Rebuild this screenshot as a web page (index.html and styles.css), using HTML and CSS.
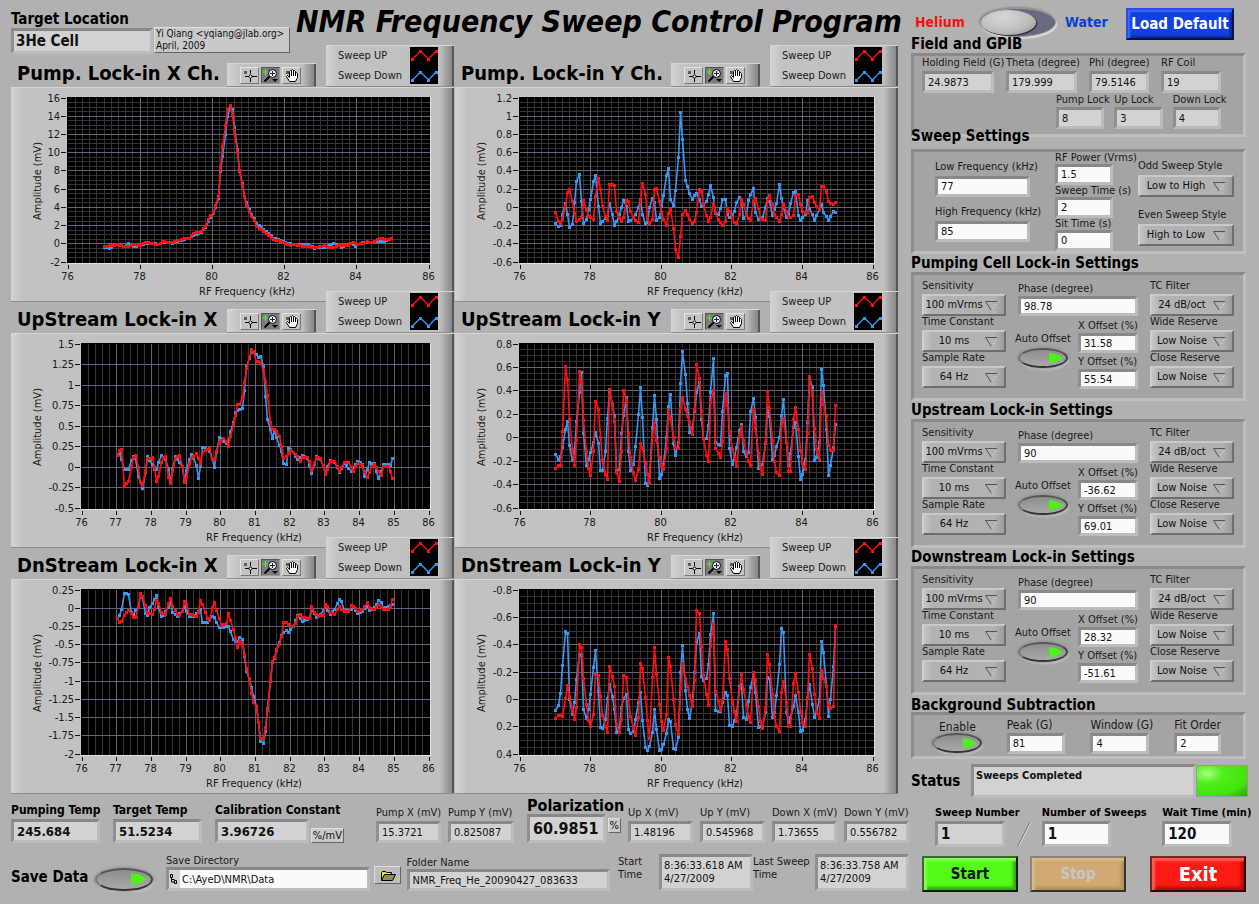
FILE: index.html
```html
<!DOCTYPE html>
<html lang="en">
<head>
<meta charset="utf-8">
<title>NMR Frequency Sweep Control Program</title>
<link rel="stylesheet" href="styles.css">
</head>
<body>
<main class="app">
  <section class="main-col">
    <header class="top">
      <div class="field target">
        <label class="h-label" for="target">Target Location</label>
        <input class="box big" id="target" value="3He Cell" readonly>
      </div>
      <p class="tag author">Yi Qiang &lt;yqiang@jlab.org&gt;<br>April, 2009</p>
      <h1>NMR Frequency Sweep Control Program</h1>
    </header>

    <div class="charts" id="charts"></div>

    <div class="readings">
      <div class="field pad-r"><label class="b-label" for="pt">Pumping Temp</label><input class="box value" id="pt" value="245.684" readonly></div>
      <div class="field pad-r"><label class="b-label" for="tt">Target Temp</label><input class="box value" id="tt" value="51.5234" readonly></div>
      <div class="field"><label class="b-label" for="cc">Calibration Constant</label><div class="with-unit calib"><input class="box value" id="cc" value="3.96726" readonly><span class="tag unit">%/mV</span></div></div>
      <div class="field"><label for="px">Pump X (mV)</label><input class="box" id="px" value="15.3721" readonly></div>
      <div class="field pad-r"><label for="py">Pump Y (mV)</label><input class="box" id="py" value="0.825087" readonly></div>
      <div class="field"><label class="p-label" for="pol">Polarization</label><div class="with-unit pol"><input class="box value pol-value" id="pol" value="60.9851" readonly><span class="tag unit">%</span></div></div>
      <div class="field"><label for="ux">Up X (mV)</label><input class="box" id="ux" value="1.48196" readonly></div>
      <div class="field"><label for="uy">Up Y (mV)</label><input class="box" id="uy" value="0.545968" readonly></div>
      <div class="field"><label for="dx">Down X (mV)</label><input class="box" id="dx" value="1.73655" readonly></div>
      <div class="field"><label for="dy">Down Y (mV)</label><input class="box" id="dy" value="0.556782" readonly></div>
    </div>

    <div class="saving">
      <label class="h-label save-label" for="save">Save Data</label>
      <input type="checkbox" class="toggle wide" id="save" checked>
      <div class="field grow">
        <label for="dir">Save Directory</label>
        <div class="box path">
          <svg width="9" height="12" viewBox="0 0 9 12" aria-hidden="true"><path d="M1.5 1.5h2v3h-2zM5.500 7.500h2v3h-2zM2.500 4.500v2h3M2.500 6.500v2.500h3" fill="none" stroke="#000"/></svg>
          <input id="dir" value="C:\AyeD\NMR\Data">
        </div>
      </div>
      <button class="browse" aria-label="Browse">
        <svg width="16" height="12" viewBox="0 0 16 12"><path d="M1.500 10.500v-8l1-1h3l1 1h5v2" fill="#e8e020" stroke="#000"/><path d="M1.500 10.500l3-6h11l-3 6z" fill="#8a8a70" stroke="#000"/></svg>
      </button>
      <div class="field grow">
        <label for="folder">Folder Name</label>
        <input class="box" id="folder" value="NMR_Freq_He_20090427_083633" readonly>
      </div>
      <div class="stamp start"><label for="st">Start Time</label><output class="box time" id="st">8:36:33.618 AM<br>4/27/2009</output></div>
      <div class="stamp last"><label for="ls">Last Sweep Time</label><output class="box time" id="ls">8:36:33.758 AM<br>4/27/2009</output></div>
    </div>
  </section>

  <aside class="side">
    <div class="target-switch">
      <label class="helium" for="gas">Helium</label>
      <input type="checkbox" class="slider" id="gas">
      <label class="water" for="gas">Water</label>
      <button class="action blue">Load Default</button>
    </div>

    <h2>Field and GPIB</h2>
    <div class="panel gpib">
      <div class="row row-a">
        <div class="field"><label for="hf">Holding Field (G)</label><input class="box" id="hf" value="24.9873" readonly></div>
        <div class="field"><label for="th">Theta (degree)</label><input class="box" id="th" value="179.999" readonly></div>
        <div class="field"><label for="ph">Phi (degree)</label><input class="box" id="ph" value="79.5146" readonly></div>
        <div class="field"><label for="rc">RF Coil</label><input class="box" id="rc" value="19" readonly></div>
      </div>
      <div class="row row-b">
        <div class="field"><label for="pl">Pump Lock</label><input class="box" id="pl" value="8" readonly></div>
        <div class="field"><label for="ul">Up Lock</label><input class="box" id="ul" value="3" readonly></div>
        <div class="field"><label for="dl">Down Lock</label><input class="box" id="dl" value="4" readonly></div>
      </div>
    </div>

    <h2 class="sweep-title">Sweep Settings</h2>
    <div class="panel sweep">
      <div class="stack freq">
        <div class="field"><label for="lf">Low Frequency (kHz)</label><input class="box edit" id="lf" value="77"></div>
        <div class="field"><label for="hfq">High Frequency (kHz)</label><input class="box edit" id="hfq" value="85"></div>
      </div>
      <div class="stack power">
        <div class="field"><label for="rp">RF Power (Vrms)</label><input class="box edit" id="rp" value="1.5"></div>
        <div class="field"><label for="swt">Sweep Time (s)</label><input class="box edit" id="swt" value="2"></div>
        <div class="field"><label for="sit">Sit Time (s)</label><input class="box edit" id="sit" value="0"></div>
      </div>
      <div class="stack style">
        <div class="field"><label for="os">Odd Sweep Style</label><div class="pick"><select id="os"><option>Low to High</option></select><svg viewBox="0 0 13 10"><path d="M0.500 0.500h12l-6 9z" fill="none" stroke="#555"/><path d="M12.500 0.500l-6 9" stroke="#ddd"/></svg></div></div>
        <div class="field"><label for="es">Even Sweep Style</label><div class="pick"><select id="es"><option>High to Low</option></select><svg viewBox="0 0 13 10"><path d="M0.500 0.500h12l-6 9z" fill="none" stroke="#555"/><path d="M12.500 0.500l-6 9" stroke="#ddd"/></svg></div></div>
      </div>
    </div>

    <div id="lockins"></div>

    <h2 class="bg-title">Background Subtraction</h2>
    <div class="panel background">
      <div class="field enable"><label for="en">Enable</label><input type="checkbox" class="toggle" id="en" checked></div>
      <div class="field"><label for="pk">Peak (G)</label><input class="box edit" id="pk" value="81"></div>
      <div class="field"><label for="wn">Window (G)</label><input class="box edit" id="wn" value="4"></div>
      <div class="field"><label for="fo">Fit Order</label><input class="box edit" id="fo" value="2"></div>
    </div>

    <div class="status">
      <label class="h-label" for="stat">Status</label>
      <output class="box" id="stat">Sweeps Completed</output>
      <span class="led"></span>
    </div>

    <div class="counts">
      <div class="field"><label for="sn">Sweep Number</label><input class="box" id="sn" value="1" readonly></div>
      <svg class="slash" viewBox="0 0 14 26" aria-hidden="true"><path d="M1 25L13 1" stroke="#666"/><path d="M2 25L14 1" stroke="#ddd"/></svg>
      <div class="field"><label for="ns">Number of Sweeps</label><input class="box edit" id="ns" value="1"></div>
      <div class="field wait"><label for="wt">Wait Time (min)</label><input class="box edit" id="wt" value="120"></div>
    </div>

    <div class="actions">
      <button class="action green">Start</button>
      <button class="action tan" disabled>Stop</button>
      <button class="action red">Exit</button>
    </div>
  </aside>
</main>
<script src="app.js"></script>
</body>
</html>
```
FILE: styles.css
```css
* { box-sizing: border-box; }

body {
  margin: 0;
  background: #b1b1b1;
  color: #111;
  font-family: "DejaVu Sans Condensed", "Noto Sans", sans-serif;
  font-size: 11px;
  line-height: 12px;
}

h1, h2, h3, p { margin: 0; }
label { white-space: nowrap; color: #1a1a1a; }
input, select, button, output { font: inherit; color: #111; }
svg { display: block; }

.app {
  display: grid;
  grid-template-columns: minmax(0, 900fr) minmax(0, 339fr);
  padding: 0 9px 0 11px;
}

.field { display: flex; flex-direction: column; min-width: 0; }

.box {
  width: 100%;
  min-width: 0;
  height: 22px;
  border: 3px solid;
  border-color: #888 #bcbcbc #bcbcbc #909090;
  background: #d2d2d2;
  padding: 0 3px;
}
.box.edit { background: #fafafa; }

.tag {
  background: #c9c9c9;
  border: 1px solid;
  border-color: #e0e0e0 #666 #666 #e0e0e0;
}

.h-label { font-size: 15px; line-height: 17px; font-weight: bold; color: #000; }
.b-label { font-size: 12px; line-height: 14px; font-weight: bold; color: #000; }

/* header */
.top { display: flex; height: 45px; padding-top: 11px; align-items: flex-start; }
.target { width: 142px; flex: none; }
.box.big { height: 26px; font-size: 15px; font-weight: bold; padding: 0 2px; }
.author { margin-top: 16px; margin-left: 1px; width: 136px; height: 26px; flex: none; padding: 0 1px; font-size: 10px; line-height: 12px; white-space: nowrap; }
h1 { margin-top: -6px; margin-left: 6px; font-size: 30px; line-height: 34px; font-style: italic; white-space: nowrap; color: #000; }

/* charts */
.charts { display: grid; grid-template-columns: minmax(0, 1fr) minmax(0, 1fr); column-gap: 1px; margin-right: 13px; }
.chart-head { display: flex; align-items: flex-end; height: 42px; position: relative; }
.chart:nth-child(n+3) .chart-head { margin-top: -11px; }
.chart-head h3 { flex: 1; padding-left: 6px; font-size: 20px; line-height: 28px; white-space: nowrap; color: #000; }
.raised {
  background: linear-gradient(90deg, #d4d4d4, #c2c2c2 12px, #c0c0c0 calc(100% - 14px), #a6a6a6 calc(100% - 9px), #888 calc(100% - 2px), #555 calc(100% - 2px));
  border-top: 1px solid #d6d6d6;
  border-bottom: 1px solid #8c8c8c;
}
.tools { display: flex; gap: 2px; width: 89px; height: 24px; padding: 3px 0 0 13px; margin-right: 10px; }
.tools button { width: 19px; height: 17px; padding: 0; border: 1px solid; border-color: #e4e4e4 #777 #777 #e4e4e4; background: #c4c4c4; }
.tools button.on { background: #7c7c7c; border-color: #555 #999 #999 #555; }
.legend { display: flex; justify-content: space-between; width: 128px; height: 42px; padding: 0 16px 0 12px; line-height: 20px; color: #1a1a1a; white-space: nowrap; }
.legend svg { margin-top: 1px; }
.plot { width: 100%; height: auto; font-size: 11px; fill: #1a1a1a; }

/* readings */
.readings {
  display: grid;
  grid-template-columns: 95fr 95fr 154fr 65fr 72fr 94fr 65fr 65fr 65fr 65fr;
  gap: 7px;
  align-items: end;
  width: calc(100% - 2px);
  margin-top: 4px;
}
.pad-r { padding-right: 6px; }
.readings label { margin-bottom: 2px; }
.readings .p-label { font-size: 16px; line-height: 16px; font-weight: bold; color: #000; margin-bottom: 0; }
.box.value { height: 24px; font-size: 13px; font-weight: bold; }
.box.pol-value { height: 29px; font-size: 16px; }
.with-unit { display: flex; gap: 2px; }
.calib { width: 129px; align-items: flex-end; }
.unit { flex: none; padding: 0 1px; line-height: 13px; }
.pol .unit { align-self: flex-start; margin-top: 4px; }

.saving { display: flex; align-items: flex-end; width: calc(100% - 2px); margin-top: 11px; }
.save-label { width: 84px; margin-bottom: 5px; }
.saving .grow { flex: 1; }
.path { display: flex; align-items: center; height: 24px; gap: 2px; padding: 0; }
.path input { flex: 1; min-width: 0; height: 18px; border: 0; padding: 0 2px; background: #fafafa; }
.browse { width: 27px; height: 18px; margin: 0 6px 7px 4px; padding: 1px 0 0 5px; border: 1px solid; border-color: #ddd #666 #666 #ddd; background: #bdbdbd; }
.stamp { display: flex; align-items: flex-start; }
.stamp label { white-space: normal; line-height: 13px; padding-top: 1px; }
.start { margin-left: 8px; }
.start label { width: 41px; }
.last label { width: 62px; }
.box.time { width: 94px; height: 37px; line-height: 13px; padding: 2px; white-space: nowrap; }

/* round toggles */
.toggle {
  appearance: none;
  position: relative;
  width: 50px;
  height: 20px;
  margin: 0;
  flex: none;
  border-radius: 50%;
  border: 2px solid;
  border-color: #555 #444 #333 #777;
  background: linear-gradient(#8e8e8e, #a8a8a8);
  box-shadow: 0 0 3px 1px #8f8f8f, 1px 2px 2px #d8d8d8;
}
.toggle:checked::before {
  content: "";
  position: absolute;
  right: 3px;
  top: 3px;
  width: 14px;
  height: 10px;
  background: #4cf01a;
  clip-path: polygon(0 0, 50% 10%, 100% 50%, 50% 90%, 0 100%);
}
.toggle.wide { width: 58px; height: 23px; margin: 0 13px 0 0; }
.toggle.wide:checked::before { width: 16px; height: 12px; right: 4px; }

.slider {
  appearance: none;
  position: relative;
  width: 76px;
  height: 29px;
  margin: 0 9px 0 0;
  border-radius: 50%;
  border: 1px solid #999;
  background: #69697f;
  box-shadow: 1px 2px 1px #ddd, -1px -1px 2px #888;
}
.slider::before {
  content: "";
  position: absolute;
  left: 0;
  top: 1px;
  width: 55px;
  height: 25px;
  border-radius: 50%;
  background: radial-gradient(ellipse at 40% 30%, #d8d8d8, #bbb 60%, #888);
  box-shadow: 1px 1px 1px #222;
}

/* side */
.target-switch { display: flex; height: 35px; padding: 8px 0 0 4px; align-items: flex-start; font-size: 14px; line-height: 28px; font-weight: bold; }
.target-switch .helium { color: #f21212; width: 65px; }
.target-switch .water { color: #0b3fd6; width: 61px; }

.action {
  height: 36px;
  border: 2px outset #444;
  font-weight: bold;
  font-size: 15px;
  padding: 0;
  white-space: nowrap;
}
.action.blue { flex: none; width: 108px; height: 32px; color: #fff; background: #1140e0; border-color: #1a2f90; box-shadow: inset 2px 2px 2px #3c6cff, inset -2px -2px 2px #0a2a9c; }
.action.green { background: #54fb18; border-color: #3a6a28; box-shadow: inset 3px 3px 2px #80ff50, inset -3px -3px 3px #2fae08; }
.action.tan { background: #d0a973; border-color: #8a8478; color: #c6c6c6; box-shadow: inset 3px 3px 2px #d9b987, inset -3px -3px 3px #b88f60; }
.action.red { background: #fc1a16; border-color: #7a2420; color: #fff; font-size: 20px; box-shadow: inset 3px 3px 2px #ff5a50, inset -3px -3px 3px #b00c08; }

h2 { font-size: 15px; line-height: 18px; white-space: nowrap; color: #000; position: relative; }

.panel {
  margin-right: 4px;
  border: 3px solid;
  border-color: #8a8a8a #bebebe #bebebe #8e8e8e;
  background: #a4a4a4;
}

.gpib { padding: 0 22px 5px 8px; }
.gpib label { line-height: 13px; margin-bottom: 2px; }
.row { display: grid; }
.row-a { grid-template-columns: 72fr 71fr 60fr 60fr; gap: 12px; }
.row-b { grid-template-columns: 49fr 49fr 49fr; gap: 10px; padding-left: 134px; }
.row-b label { margin-bottom: 1px; }

.sweep-title { margin-top: -10px; margin-bottom: 4px; }
.sweep { display: grid; grid-template-columns: 95fr 58fr 96fr; column-gap: 25px; padding: 0 9px 0 21px; }
.stack { display: flex; flex-direction: column; min-width: 0; }
.freq { padding-top: 9px; gap: 9px; }
.freq label { margin-bottom: 3px; }
.freq .box, .power .box { height: 21px; }
.style { padding-top: 8px; gap: 12px; }
.style label { margin-bottom: 3px; }

.pick { position: relative; }
.pick select {
  appearance: none;
  width: 100%;
  height: 22px;
  border: 2px solid;
  border-color: #c9c9c9 #6e6e6e #6e6e6e #d0d0d0;
  border-radius: 0;
  background: linear-gradient(90deg, #c6c6c6, #b2b2b2 8px, #b2b2b2 88%, #9c9c9c);
  padding: 0 20px 0 0;
  text-align: center;
  text-align-last: center;
}
.pick svg { position: absolute; right: 8px; top: 7px; width: 13px; height: 10px; pointer-events: none; }

.lockin { display: grid; grid-template-columns: 84fr 120fr 84fr; column-gap: 12px; padding: 5px 9px 9px 8px; }
.lockin .stack label { margin-bottom: 2px; }
.lockin .mid { display: grid; grid-template-columns: 60fr 60fr; row-gap: 4px; padding-top: 3px; align-content: start; }
.lockin .mid label { margin-bottom: 1px; }
.lockin .mid .box { height: 20px; }
.lockin .phase { grid-column: 1 / -1; }
.lockin .offsets { display: grid; gap: 3px; }
.auto { padding-top: 13px; }
.auto label { margin-left: -3px; }
.auto .toggle { margin-top: 2px; }

.bg-title { margin-top: 1px; margin-bottom: -2px; }
.background { display: grid; grid-template-columns: 50fr 59fr 59fr 47fr; column-gap: 25px; padding: 4px 22px 2px 18px; font-size: 12px; }
.background .box { font-size: 11px; height: 21px; margin-top: 1px; }
.background .field label { line-height: 13px; }
.enable label { padding-left: 7px; margin-top: 2px; }
.enable .toggle { margin-top: -1px; }

.status { display: flex; align-items: center; margin: 5px 2px 0 0; }
.status .h-label { width: 60px; flex: none; }
.status .box { flex: 1; height: 34px; padding: 3px 2px; font-weight: bold; }
.led { width: 52px; height: 32px; border: 1px solid #999; background: radial-gradient(ellipse at 20% 25%, #a8ff80, #4cf01a 30%, #44e40e 70%, #2aa800); }

.counts {
  display: grid;
  grid-template-columns: 70fr 37fr 70fr 51fr 70fr;
  align-items: end;
  padding: 8px 18px 0 24px;
  font-weight: bold;
}
.counts .wait { grid-column: 5; }
.counts label { line-height: 13px; margin-bottom: 2px; color: #000; }
.counts .box { height: 26px; font-size: 15px; font-weight: bold; }
.slash { width: 14px; height: 26px; margin-left: 12px; }

.actions { display: grid; grid-template-columns: 96fr 96fr 108fr; column-gap: 12px; margin: 9px 4px 0 11px; }
.actions .red { margin-left: 12px; }
```
FILE: app.js
```js
const RED = "#ff1010", BLUE = "#3c96f0";

const charts = [
  { title: "Pump. Lock-in X Ch.", left: 57, dx: 11, dy: 87, xstep: 2, xsub: 10, y: [16, -2, 2], ysub: 4,
    red: "314,737 350,731 380,737 400,731 420,733 440,724 470,731 488,722 520,724 545,715 565,711 580,698 600,691 615,675 625,656 638,633 646,613 652,586 658,550 664,500 672,436 679,373 685,326 691,313 700,344 706,395 712,455 718,508 726,553 733,587 739,613 748,631 755,645 762,658 770,676 790,692 820,715 850,724 870,733 885,730 910,736 950,739 970,734 995,740 1020,733 1045,733 1058,724 1075,731 1100,722 1120,724 1140,712 1160,716 1175,712",
    blue: "314,739 330,742 350,730 370,737 388,727 400,737 420,733 440,727 470,729 488,724 520,726 545,717 565,712 580,702 600,693 615,678 625,660 638,638 646,620 652,592 658,560 664,512 672,465 679,400 685,345 691,318 700,325 706,380 712,445 720,510 733,585 748,625 770,668 790,685 820,711 850,722 870,728 885,731 920,730 940,741 980,738 1003,727 1020,738 1050,728 1065,735 1085,724 1150,722 1175,712" },
  { title: "Pump. Lock-in Y Ch.", left: 65, dx: 5, dy: 87, xstep: 2, xsub: 10, y: [1.2, -0.6, 0.2], ysub: 4,
    blue: "317,667 325,677 332,672 343,607 350,640 358,680 365,670 372,640 376,604 383,542 391,520 398,600 404,667 411,655 418,625 424,596 431,541 436,523 443,615 449,668 458,660 470,645 477,607 483,640 490,674 497,673 503,660 515,620 523,599 530,615 536,661 545,658 555,640 562,620 568,595 575,640 583,668 590,664 600,620 608,592 615,605 622,658 630,648 640,583 650,523 656,502 662,596 667,614 674,568 682,470 688,380 694,334 700,415 707,538 716,577 724,596 733,582 742,577 752,616 760,612 768,600 775,580 781,553 788,590 795,638 803,640 813,622 820,596 826,595 833,640 842,650 852,630 860,605 866,590 873,600 881,652 890,640 898,598 908,562 914,562 919,634 926,655 935,650 945,620 953,592 960,600 967,644 978,608 985,575 991,550 998,592 1006,649 1015,640 1024,608 1033,575 1040,571 1046,643 1052,658 1062,640 1073,598 1080,625 1090,657 1100,643 1110,625 1118,611 1125,634 1133,658 1139,658 1150,632 1157,634",
    red: "317,634 325,660 335,674 341,655 349,574 358,565 365,602 372,638 377,655 383,661 392,650 401,598 409,626 418,645 425,650 430,655 436,586 442,532 449,565 458,617 465,647 470,658 477,640 482,550 490,553 497,600 503,632 510,652 516,661 523,649 530,598 536,600 545,632 553,650 562,664 568,598 575,547 582,580 590,625 595,652 602,667 608,655 616,565 622,562 629,602 636,632 643,655 650,673 655,638 661,625 667,682 674,745 682,769 688,750 694,706 700,640 707,628 715,640 722,655 728,668 735,661 742,634 748,566 755,571 762,610 768,644 775,661 782,650 789,608 797,634 805,655 815,673 823,661 830,622 838,632 845,650 852,664 860,667 866,640 874,595 881,610 888,640 895,652 905,658 913,602 919,592 926,622 934,652 942,661 948,658 952,598 958,583 966,610 974,640 985,661 992,640 1000,610 1010,632 1018,647 1025,650 1033,643 1040,583 1045,580 1052,610 1058,631 1070,637 1080,589 1085,587 1092,604 1100,617 1110,624 1118,556 1124,556 1133,587 1139,602 1150,611 1157,604" },
  { title: "UpStream Lock-in X", left: 71, dx: 11, dy: 38, xstep: 1, xsub: 5, y: [1.5, -0.5, 0.25], ysub: 1,
    red: "352,479 358,464 365,461 371,497 376,571 385,556 392,515 398,483 408,479 414,515 420,560 425,586 431,568 437,525 443,488 454,485 462,515 469,556 476,541 482,500 490,483 502,481 508,545 515,563 522,525 528,486 540,478 547,510 554,559 560,545 566,505 572,488 585,472 592,487 600,503 610,468 620,461 632,458 638,490 645,490 650,466 658,440 665,432 670,427 677,436 683,450 690,420 697,385 703,358 710,338 716,325 721,325 728,304 736,260 742,216 748,185 755,161 762,166 769,197 776,197 782,200 788,222 794,257 800,298 808,378 814,410 820,400 827,400 833,407 840,420 848,450 855,488 862,480 870,464 880,470 890,480 897,497 905,483 920,485 927,495 932,524 938,522 943,502 950,483 965,487 972,510 978,535 985,520 992,497 1005,495 1012,512 1018,525 1025,515 1033,500 1048,500 1058,527 1065,510 1075,503 1087,507 1094,525 1100,544 1107,530 1115,512 1122,505 1130,515 1140,538 1147,525 1153,512 1165,511 1172,525 1178,548",
    blue: "352,479 358,473 368,490 376,520 385,520 392,492 398,481 408,488 415,540 425,580 431,576 443,480 450,492 462,519 472,520 482,478 495,490 505,520 515,560 528,482 535,490 545,510 554,556 565,490 572,475 580,485 592,530 598,548 605,510 611,454 620,460 632,466 643,514 650,470 658,424 667,428 680,442 688,435 697,378 703,350 716,344 727,337 736,283 742,210 755,165 769,176 776,185 782,181 788,212 798,300 806,370 815,428 820,428 827,400 838,448 848,465 855,503 858,506 866,458 875,460 890,490 905,478 920,487 937,531 950,482 965,490 977,530 990,492 1005,498 1021,530 1035,502 1055,525 1073,496 1085,505 1098,540 1112,499 1122,503 1139,547 1152,505 1165,506 1172,507 1178,487" },
  { title: "UpStream Lock-in Y", left: 65, dx: 5, dy: 38, xstep: 2, xsub: 10, y: [0.8, -0.6, 0.2], ysub: 4,
    blue: "317,475 325,490 332,482 338,455 344,400 350,376 357,448 365,493 372,470 383,375 391,290 398,229 404,412 410,508 418,490 425,470 437,409 443,442 449,523 458,523 468,465 475,367 482,290 490,360 497,522 505,520 515,412 528,305 535,465 542,523 549,505 555,450 562,355 568,274 575,365 583,562 590,568 597,545 607,395 616,298 622,370 629,548 636,535 643,505 650,425 656,331 661,295 667,442 674,478 682,440 694,263 700,166 707,235 716,409 724,395 733,345 742,290 748,260 755,370 762,427 768,427 775,388 781,290 788,187 794,260 800,440 808,448 815,420 820,346 826,239 832,232 841,457 848,505 858,455 866,403 874,385 881,466 888,480 895,468 905,345 914,271 920,365 926,517 935,505 945,442 955,335 960,360 967,490 975,478 985,424 992,358 1000,310 1007,440 1013,508 1023,472 1033,395 1040,378 1046,480 1052,550 1060,535 1067,490 1073,380 1078,245 1085,275 1091,493 1100,485 1108,440 1112,340 1118,220 1124,268 1133,532 1139,538 1145,508 1151,455 1157,385",
    red: "317,517 325,508 332,508 338,406 343,212 350,250 358,370 365,460 371,508 377,535 383,432 391,226 398,260 404,374 410,466 416,517 425,538 431,466 437,316 443,340 449,424 458,493 464,535 470,550 476,346 482,280 490,376 497,472 503,529 509,556 515,466 523,283 530,313 536,412 542,484 549,529 556,553 562,520 568,442 575,457 583,502 590,535 596,556 602,562 608,422 616,379 622,433 629,484 635,508 641,520 649,457 656,343 661,367 667,424 674,455 682,457 688,442 694,337 700,304 707,340 716,380 724,403 728,415 734,340 742,206 748,247 755,346 762,427 768,478 775,496 781,320 788,283 794,376 800,457 808,485 815,520 820,436 826,292 832,328 841,406 848,460 858,511 866,418 874,392 881,433 888,468 895,496 900,508 907,340 914,307 920,394 926,472 932,514 940,535 946,440 953,287 960,337 967,433 974,496 980,529 986,538 992,391 1000,367 1007,440 1013,493 1018,526 1024,526 1033,370 1040,335 1046,400 1052,463 1058,502 1067,520 1073,412 1078,242 1085,298 1091,397 1100,460 1106,490 1112,415 1118,290 1124,325 1133,400 1139,445 1145,463 1151,463 1157,328" },
  { title: "DnStream Lock-in X", left: 71, dx: 11, dy: 34, xstep: 1, xsub: 5, y: [0.25, -2, 0.25], ysub: 1,
    red: "352,218 360,228 370,227 376,208 387,192 393,203 403,214 410,214 416,180 424,142 431,150 437,178 445,203 454,204 462,190 470,163 477,172 485,200 500,204 508,172 514,157 522,180 530,204 540,208 547,195 554,166 562,175 570,204 585,211 592,200 599,163 606,175 615,200 625,218 632,223 638,185 643,169 650,192 658,218 667,238 677,232 683,202 690,222 698,250 704,278 710,293 716,304 722,286 728,294 736,325 743,368 748,402 754,442 760,468 770,482 776,530 782,577 788,577 794,545 800,493 808,404 814,346 822,334 828,325 833,310 840,295 848,270 855,230 862,230 870,241 880,240 888,232 893,210 898,205 908,215 925,217 932,190 938,182 945,200 955,211 967,208 976,176 983,182 990,200 1003,205 1012,190 1020,182 1030,197 1045,196 1055,178 1062,180 1075,195 1090,190 1099,170 1108,185 1125,190 1138,176 1148,190 1165,190 1172,182 1178,160",
    blue: "352,216 358,208 365,190 371,168 376,142 385,145 392,200 403,206 415,180 424,146 432,160 437,203 443,208 452,185 462,160 469,149 476,185 483,211 492,208 505,185 514,165 522,200 530,210 545,195 556,180 566,211 580,210 592,195 599,190 608,230 620,230 635,212 643,213 650,230 658,244 670,244 683,240 690,255 698,280 705,287 715,285 722,274 728,280 736,330 743,376 754,425 762,450 770,482 776,530 782,587 788,593 794,556 800,488 808,406 814,350 827,336 838,290 848,268 856,252 866,259 878,240 893,208 905,226 925,217 938,190 950,214 965,205 976,180 988,204 1003,190 1010,172 1016,160 1022,166 1030,197 1050,190 1060,185 1073,202 1087,197 1099,180 1110,194 1125,185 1138,163 1145,168 1152,187 1165,180 1178,175" },
  { title: "DnStream Lock-in Y", left: 65, dx: 5, dy: 34, xstep: 2, xsub: 10, y: [-0.8, 0.4, 0.2], ysub: 4,
    blue: "317,493 325,479 332,442 338,358 343,256 350,262 357,460 365,506 375,469 384,400 391,325 397,328 404,490 410,517 418,490 424,446 431,364 436,313 443,436 449,545 458,547 468,520 475,457 482,415 490,490 497,559 505,545 515,485 526,430 530,445 536,551 542,562 549,555 556,520 562,469 568,440 575,524 583,604 590,613 596,602 604,560 610,520 616,490 622,551 629,613 636,610 641,595 649,562 656,520 661,527 668,607 674,610 682,575 688,520 694,380 700,298 707,433 716,547 722,517 728,466 734,380 742,290 748,262 755,391 762,403 768,397 775,355 781,265 788,202 794,353 800,493 815,500 820,470 826,439 832,448 841,538 848,540 858,505 866,421 874,415 881,514 888,520 898,465 907,385 914,325 920,440 926,544 935,540 945,500 953,394 960,398 967,514 974,500 980,448 986,355 992,247 1000,259 1007,500 1013,529 1023,515 1033,480 1040,448 1046,500 1052,556 1058,552 1067,520 1073,455 1078,415 1085,475 1091,514 1100,497 1106,460 1112,380 1118,286 1124,320 1133,520 1139,511 1145,460 1151,362 1157,240",
    red: "317,517 325,508 332,508 338,511 343,457 350,418 358,452 365,490 371,521 377,539 383,485 391,295 398,304 404,397 410,476 416,524 425,541 431,506 437,385 443,388 449,452 458,508 464,541 470,559 476,427 482,361 490,422 497,493 503,535 509,559 515,520 523,388 530,394 536,460 542,511 549,545 556,568 562,514 568,352 575,367 583,454 590,524 596,559 602,577 608,394 616,304 622,385 629,475 635,527 641,553 649,506 656,334 661,361 667,460 674,535 682,565 688,572 694,427 700,352 707,397 716,448 724,475 728,481 734,403 742,193 748,202 755,301 762,388 768,445 775,478 781,301 788,233 794,334 800,436 808,493 815,520 820,463 826,286 832,310 841,397 848,466 858,526 866,427 874,385 881,430 888,475 895,511 900,529 907,379 914,322 920,403 926,481 932,526 940,547 946,487 953,325 960,355 967,445 974,511 980,541 986,556 992,439 1000,406 1007,469 1013,517 1018,541 1024,541 1033,412 1040,382 1046,439 1052,496 1058,529 1067,541 1073,455 1078,325 1085,367 1091,445 1100,496 1106,517 1112,463 1118,373 1124,397 1133,448 1139,478 1145,487 1151,481 1157,239" }
];

const TOP = 10, BOTTOM = 175, RIGHT = 419;

/* Traces are stored in thirds of a pixel; samples sit on 120 even frequency steps. */
function trace(c, text, color) {
  const given = text.split(" ").map(p => p.split(",").map(Number));
  const x0 = given[0][0], step = (given[given.length - 1][0] - x0) / 119;
  const known = given.map(([x, y]) => [Math.round((x - x0) / step), y]);
  let line = "", dots = "", k = 0;
  for (let i = 0; i < 120; i++) {
    while (k < known.length - 2 && known[k + 1][0] <= i) k++;
    const [a, ya] = known[k], [b, yb] = known[k + 1];
    const v = b === a ? yb : ya + (yb - ya) * (i - a) / (b - a);
    const x = Math.floor((x0 + i * step) / 3 - c.dx), y = Math.floor(v / 3 - c.dy);
    line += `${x + 0.5},${y + 0.5} `;
    dots += `M${x - 1} ${y - 1}h3v3h-3z`;
  }
  return `<polyline points="${line}" fill="none" stroke="${color}" stroke-width="1.6"/><path d="${dots}" fill="${color}"/>`;
}

function plot(c) {
  const w = RIGHT - c.left, h = BOTTOM - TOP;
  const xn = 10 / c.xstep, yn = Math.round(Math.abs(c.y[0] - c.y[1]) / c.y[2]);
  const dir = c.y[1] > c.y[0] ? 1 : -1;
  let minor = "", major = "", ticks = "", labels = "";
  for (let i = 1; i < xn * c.xsub; i++) {
    const x = Math.floor(c.left + (w - 1) * i / (xn * c.xsub)) + 0.5;
    if (i % c.xsub) minor += `M${x} ${TOP}V${BOTTOM}`; else major += `M${x} ${TOP}V${BOTTOM}`;
  }
  for (let i = 1; i < yn * c.ysub; i++) {
    const y = Math.floor(TOP + (h - 1) * i / (yn * c.ysub)) + 0.5;
    if (i % c.ysub) minor += `M${c.left} ${y}H${RIGHT}`; else major += `M${c.left} ${y}H${RIGHT}`;
  }
  for (let i = 0; i <= xn; i++) {
    const x = Math.floor(c.left + (w - 1) * i / xn) + 0.5;
    ticks += `M${x} 177v4`;
    labels += `<text x="${x - 1}" y="192" text-anchor="middle">${76 + i * c.xstep}</text>`;
  }
  for (let i = 0; i <= yn; i++) {
    const y = Math.floor(TOP + (h - 1) * i / yn) + 0.5;
    const v = +(c.y[0] + dir * c.y[2] * i).toFixed(2);
    ticks += `M${c.left - 7} ${y}h5`;
    labels += `<text x="${c.left - 8}" y="${y + 3}" text-anchor="end">${v === 0 ? 0 : v}</text>`;
  }
  const mid = (c.left + RIGHT) / 2 - 2;
  return `<svg class="plot" viewBox="0 0 443 213" role="img" aria-label="${c.title}">
    <rect x="${c.left}" y="${TOP - 1}" width="${w + 1}" height="${h + 2}" fill="#e0e0e0"/>
    <rect x="${c.left - 1}" y="${TOP - 1}" width="${w + 1}" height="${h + 1}" fill="#000"/>
    <path d="${minor}" stroke="#343434"/><path d="${major}" stroke="#64627a"/>
    <path d="${ticks}" stroke="#111"/>${labels}
    <text x="${mid}" y="207" text-anchor="middle">RF Frequency (kHz)</text>
    <text transform="translate(30 93) rotate(-90)" text-anchor="middle">Amplitude (mV)</text>
    ${trace(c, c.blue, BLUE)}${trace(c, c.red, RED)}
  </svg>`;
}

const led = on => `<path d="M3 3h3v3h-3z" fill="${on ? "#4ee020" : "#4c6a48"}"/>`;
const tools = `<div class="tools raised">
  <button aria-label="Cursor"><svg width="17" height="15" viewBox="0 0 17 15">${led(0)}<path d="M9.500 2v4M9.500 10v4M4 8.500h4M11 8.500h5" stroke="#000"/><circle cx="9.500" cy="8.500" r="1.500" fill="#fff" stroke="#000"/></svg></button>
  <button class="on" aria-label="Zoom"><svg width="17" height="15" viewBox="0 0 17 15"><path d="M3.500 1v6M0.500 4h6" stroke="#5bf02a"/><circle cx="10.500" cy="5.500" r="4" fill="#e8e8ff" stroke="#000"/><path d="M8 5.500h5M10.500 3v5" stroke="#223"/><path d="M7.500 8.500l-5 5" stroke="#000" stroke-width="2"/><path d="M10 11h6l-3 3z" fill="#000"/></svg></button>
  <button aria-label="Pan"><svg width="17" height="15" viewBox="0 0 17 15">${led(0)}<path d="M6.500 13.500l-3-5 1-1 2 2v-6l1-1 1 1v-1l1-1 1 1v1l1-1 1 1v2l1-1 1 1v4l-2 4z" fill="#fff" stroke="#000"/><path d="M8.500 3v5M10.500 3v5M12.500 5v3" stroke="#000"/></svg></button>
</div>`;

const key = (y, c) => `<path d="M2.500 ${y + 8}L10.500 ${y}L18.500 ${y + 8}L26 ${y}" fill="none" stroke="${c}" stroke-width="1.4"/><path d="M1 ${y + 7}h3v3h-3zM9 ${y - 1}h3v3h-3zM17 ${y + 7}h3v3h-3zM25 ${y - 1}h3v3h-3z" fill="${c}"/>`;
const legend = `<div class="legend raised"><div>Sweep UP<br>Sweep Down</div>
  <svg width="28" height="37" viewBox="0 0 28 37"><rect width="28" height="37"/>${key(4, RED)}${key(25, BLUE)}</svg></div>`;

document.getElementById("charts").innerHTML = charts.map(c =>
  `<section class="chart"><div class="chart-head"><h3>${c.title}</h3>${tools}${legend}</div><div class="raised">${plot(c)}</div></section>`).join("");

const arrow = `<svg viewBox="0 0 13 10"><path d="M0.500 0.500h12l-6 9z" fill="none" stroke="#555"/><path d="M12.500 0.500l-6 9" stroke="#ddd"/></svg>`;
const pick = (id, label, value) => `<div class="field"><label for="${id}">${label}</label><div class="pick"><select id="${id}"><option>${value}</option></select>${arrow}</div></div>`;
const edit = (id, label, value, cls = "") => `<div class="field ${cls}"><label for="${id}">${label}</label><input class="box edit" id="${id}" value="${value}"></div>`;

document.getElementById("lockins").innerHTML = [
  ["Pumping Cell", "98.78", "31.58", "55.54"],
  ["Upstream", "90", "-36.62", "69.01"],
  ["Downstream", "90", "28.32", "-51.61"]
].map(([name, phase, x, y], i) => `<h2>${name} Lock-in Settings</h2>
  <div class="panel lockin">
    <div class="stack">${pick("se" + i, "Sensitivity", "100 mVrms")}${pick("tc" + i, "Time Constant", "10 ms")}${pick("sr" + i, "Sample Rate", "64 Hz")}</div>
    <div class="mid">${edit("phs" + i, "Phase (degree)", phase, "phase")}
      <div class="field auto"><label for="ao${i}">Auto Offset</label><input type="checkbox" class="toggle" id="ao${i}" checked></div>
      <div class="offsets">${edit("xo" + i, "X Offset (%)", x)}${edit("yo" + i, "Y Offset (%)", y)}</div></div>
    <div class="stack">${pick("tf" + i, "TC Filter", "24 dB/oct")}${pick("wr" + i, "Wide Reserve", "Low Noise")}${pick("cr" + i, "Close Reserve", "Low Noise")}</div>
  </div>`).join("");
```
